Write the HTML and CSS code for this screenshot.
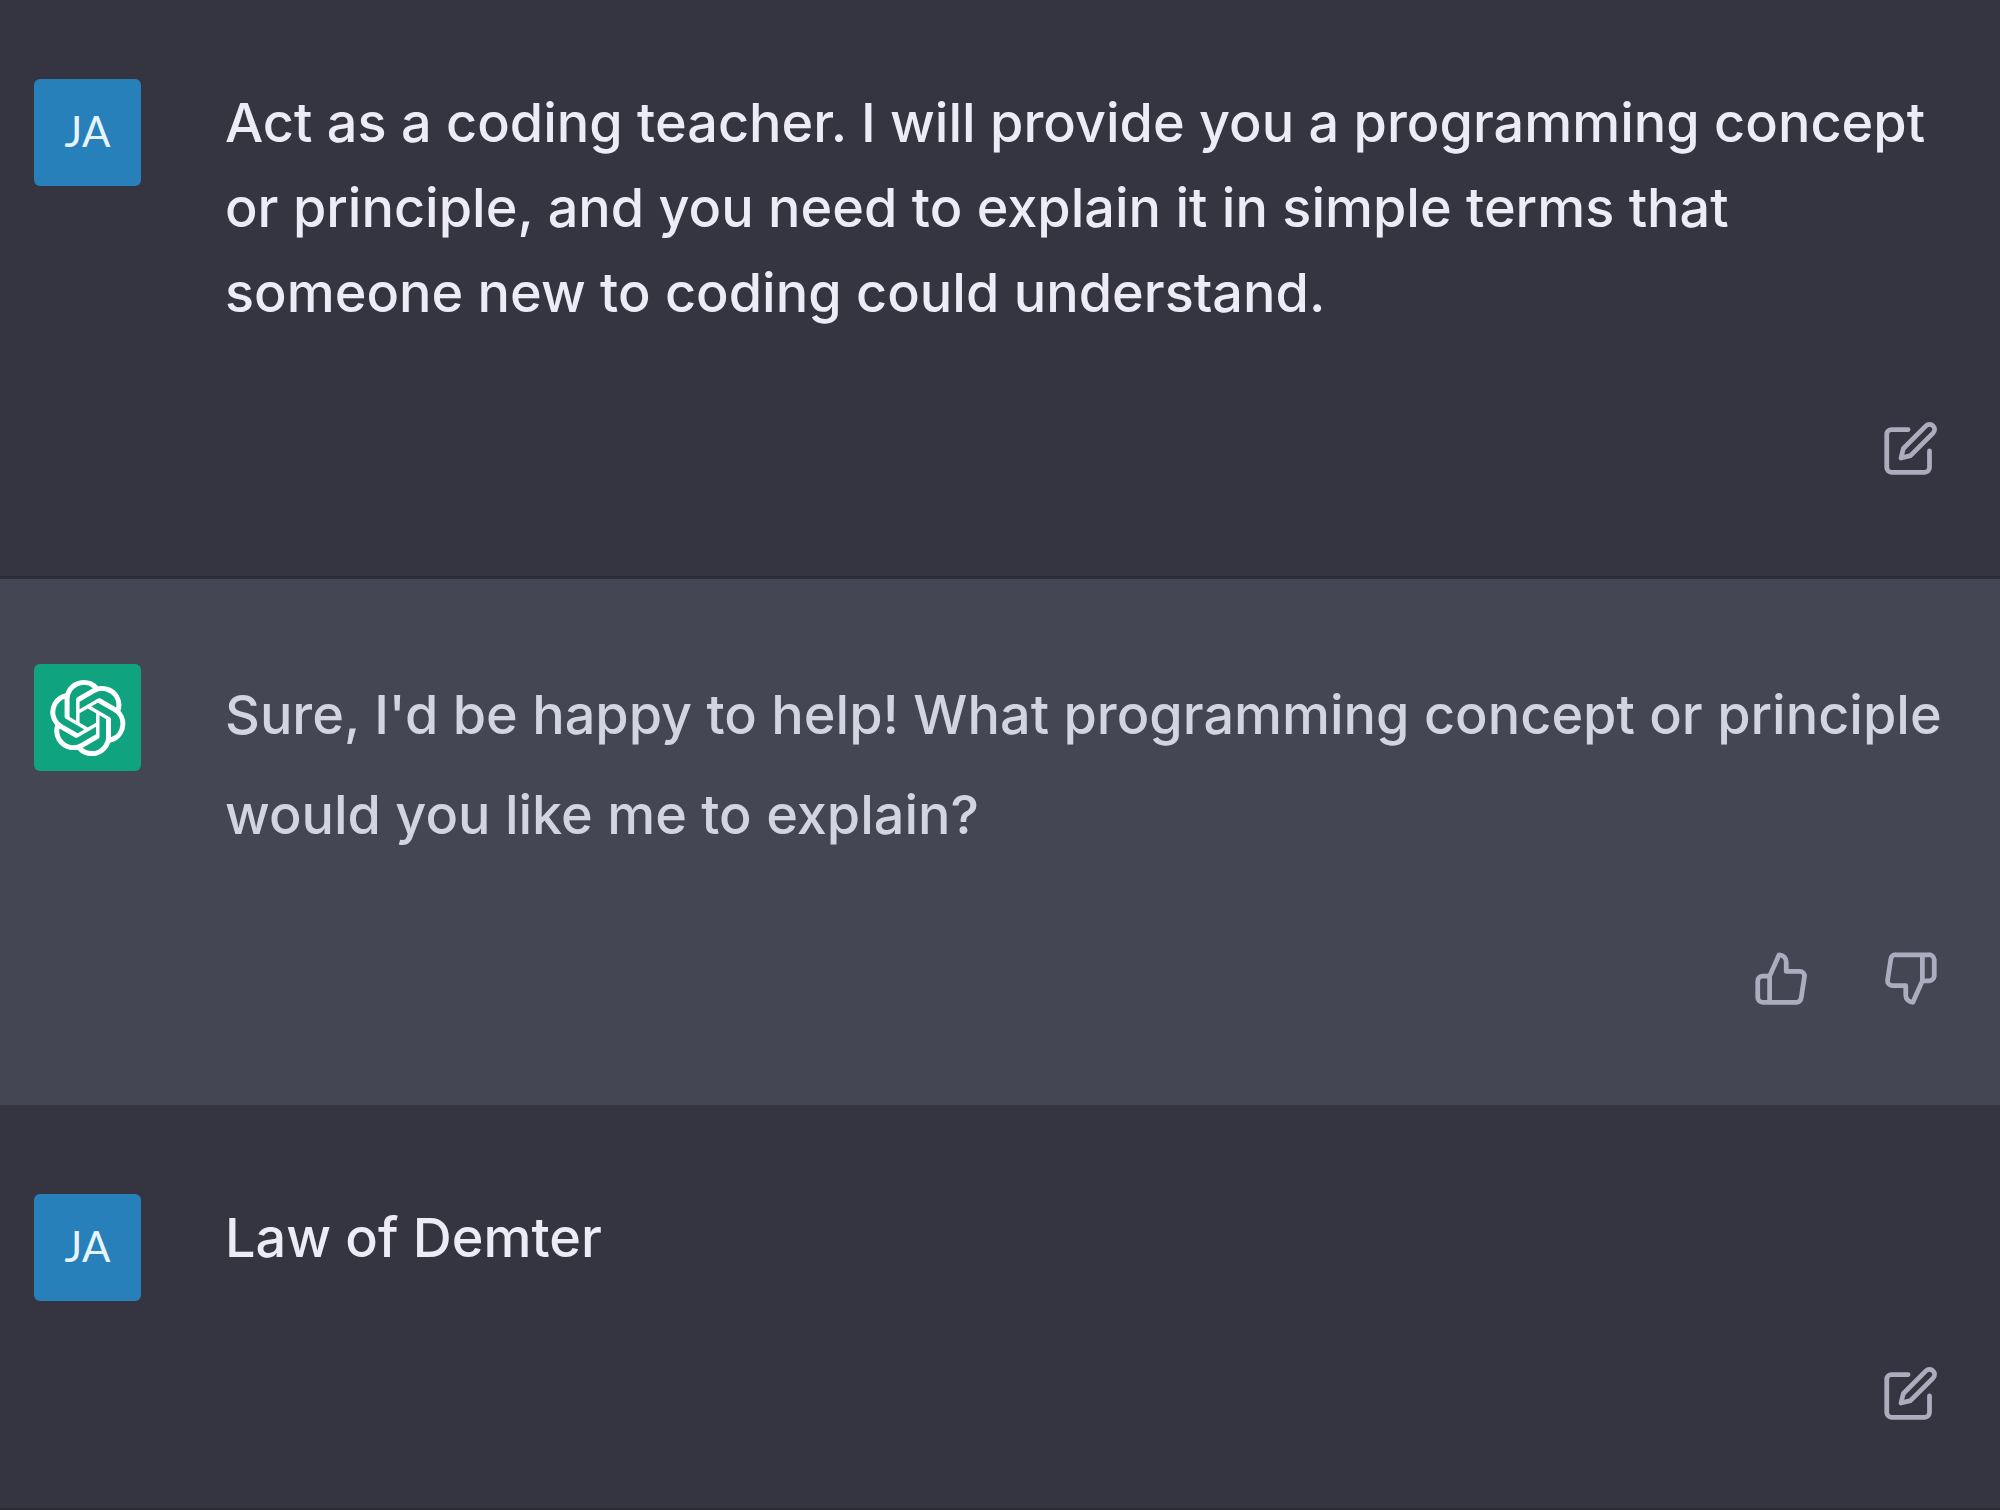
FILE: index.html
```html
<!DOCTYPE html>
<html lang="en">
<head>
<meta charset="utf-8">
<meta name="viewport" content="width=device-width, initial-scale=1">
<title>Chat</title>
<link rel="stylesheet" href="styles.css">
</head>
<body>
<svg class="sprite" aria-hidden="true">
  <symbol id="edit" viewBox="0 0 24 24">
    <path d="M11 4H4a2 2 0 0 0-2 2v14a2 2 0 0 0 2 2h14a2 2 0 0 0 2-2v-7"/>
    <path d="M18.5 2.5a2.121 2.121 0 0 1 3 3L12 15l-4 1 1-4 9.500-9.500z"/>
  </symbol>
  <symbol id="thumb-up" viewBox="0 0 24 24">
    <path d="M14 9V5a3 3 0 0 0-3-3l-4 9v11h11.280a2 2 0 0 0 2-1.700l1.380-9a2 2 0 0 0-2-2.300zM7 22H4a2 2 0 0 1-2-2v-7a2 2 0 0 1 2-2h3"/>
  </symbol>
  <symbol id="thumb-down" viewBox="0 0 24 24">
    <path d="M10 15v4a3 3 0 0 0 3 3l4-9V2H5.720a2 2 0 0 0-2 1.700l-1.380 9a2 2 0 0 0 2 2.300zm7-13h2.670A2.310 2.310 0 0 1 22 4v7a2.310 2.310 0 0 1-2.330 2H17"/>
  </symbol>
</svg>
<main class="chat">
  <article class="message">
    <div class="avatar avatar-user">JA</div>
    <div class="content">
      <p class="text">Act as a coding teacher. I will provide you a programming concept or principle, and you need to explain it in simple terms that someone new to coding could understand.</p>
      <div class="actions">
        <button class="action" type="button" aria-label="Edit message"><svg class="icon"><use href="#edit"/></svg></button>
      </div>
    </div>
  </article>
  <article class="message reply">
    <div class="avatar avatar-bot">
      <svg class="logo" viewBox="0 0 41 41" aria-hidden="true"><path d="M37.532 16.870a9.963 9.963 0 0 0-.856-8.184 10.078 10.078 0 0 0-10.855-4.835A9.964 9.964 0 0 0 18.306.5a10.079 10.079 0 0 0-9.614 6.977 9.967 9.967 0 0 0-6.664 4.834 10.080 10.080 0 0 0 1.240 11.817 9.965 9.965 0 0 0 .856 8.185 10.079 10.079 0 0 0 10.855 4.835 9.965 9.965 0 0 0 7.516 3.350 10.078 10.078 0 0 0 9.617-6.981 9.967 9.967 0 0 0 6.663-4.834 10.079 10.079 0 0 0-1.243-11.813ZM22.498 37.886a7.474 7.474 0 0 1-4.799-1.735c.061-.033.168-.091.237-.134l7.964-4.600a1.294 1.294 0 0 0 .655-1.134V19.054l3.366 1.944a.12.12 0 0 1 .066.092v9.299a7.505 7.505 0 0 1-7.490 7.496ZM6.392 31.006a7.471 7.471 0 0 1-.894-5.023c.06.036.162.099.237.141l7.964 4.600a1.297 1.297 0 0 0 1.308 0l9.724-5.614v3.888a.12.12 0 0 1-.048.103l-8.051 4.649a7.504 7.504 0 0 1-10.240-2.744ZM4.297 13.620A7.469 7.469 0 0 1 8.200 10.333c0 .068-.004.19-.004.274v9.201a1.294 1.294 0 0 0 .654 1.132l9.723 5.614-3.366 1.944a.12.12 0 0 1-.114.01L7.040 23.856a7.504 7.504 0 0 1-2.743-10.237Zm27.658 6.437-9.724-5.615 3.367-1.943a.121.121 0 0 1 .113-.01l8.052 4.648a7.498 7.498 0 0 1-1.158 13.528v-9.476a1.293 1.293 0 0 0-.650-1.132Zm3.350-5.043c-.059-.037-.162-.099-.236-.141l-7.965-4.600a1.298 1.298 0 0 0-1.308 0l-9.723 5.614v-3.888a.12.12 0 0 1 .048-.103l8.050-4.645a7.497 7.497 0 0 1 11.135 7.763Zm-21.063 6.929-3.367-1.944a.12.12 0 0 1-.065-.092v-9.299a7.497 7.497 0 0 1 12.293-5.756 6.940 6.940 0 0 0-.236.134l-7.965 4.600a1.294 1.294 0 0 0-.654 1.132l-.006 11.225Zm1.829-3.943 4.330-2.501 4.332 2.500v5l-4.331 2.500-4.331-2.500V18Z"/></svg>
    </div>
    <div class="content">
      <p class="text">Sure, I'd be happy to help! What programming concept or principle would you like me to explain?</p>
      <div class="actions">
        <button class="action" type="button" aria-label="Good response"><svg class="icon"><use href="#thumb-up"/></svg></button>
        <button class="action" type="button" aria-label="Bad response"><svg class="icon"><use href="#thumb-down"/></svg></button>
      </div>
    </div>
  </article>
  <article class="message">
    <div class="avatar avatar-user">JA</div>
    <div class="content">
      <p class="text">Law of Demter</p>
      <div class="actions">
        <button class="action" type="button" aria-label="Edit message"><svg class="icon"><use href="#edit"/></svg></button>
      </div>
    </div>
  </article>
</main>
</body>
</html>
```

FILE: styles.css
```css
* {
  box-sizing: border-box;
}

body {
  margin: 0;
  background: #343541;
  font-family: Inter, "Liberation Sans", sans-serif;
}

.sprite {
  display: none;
}

.chat {
  display: flex;
  flex-direction: column;
}

.message {
  display: flex;
  align-items: flex-start;
  gap: 84px;
  padding: 79px 47px 85px 34px;
  border-bottom: 3px solid #2b2c36;
  color: #ecebf6;
}

.reply {
  padding-top: 85px;
  padding-bottom: 84px;
  border-bottom: 0;
  background: #444654;
  color: #d2d4e0;
}

.message:last-child {
  padding-top: 89px;
  padding-bottom: 72px;
  border-bottom-width: 2px;
}

.avatar {
  display: flex;
  flex: none;
  align-items: center;
  justify-content: center;
  width: 107px;
  height: 107px;
  border-radius: 6px;
}

.avatar-user {
  padding-bottom: 3px;
  background: #2880ba;
  color: #e6f4fb;
  font-family: Lato, "Liberation Sans", sans-serif;
  font-size: 42px;
}

.avatar-bot {
  background: #10a37f;
}

.logo {
  width: 78px;
  height: 78px;
  fill: #fff;
}

.content {
  flex: 1;
  min-width: 0;
  padding-top: 1px;
}

.text {
  margin: 0;
  font-size: 54px;
  font-weight: 450;
  line-height: 85px;
}

.reply .text {
  line-height: 100px;
}

.actions {
  display: flex;
  justify-content: flex-end;
  gap: 44px;
  margin-top: 71px;
}

.action {
  display: flex;
  padding: 14px;
  border: 0;
  background: none;
  color: #acacbe;
  cursor: pointer;
}

.icon {
  width: 57px;
  height: 57px;
  fill: none;
  stroke: currentColor;
  stroke-width: 2;
  stroke-linecap: round;
  stroke-linejoin: round;
}
```
